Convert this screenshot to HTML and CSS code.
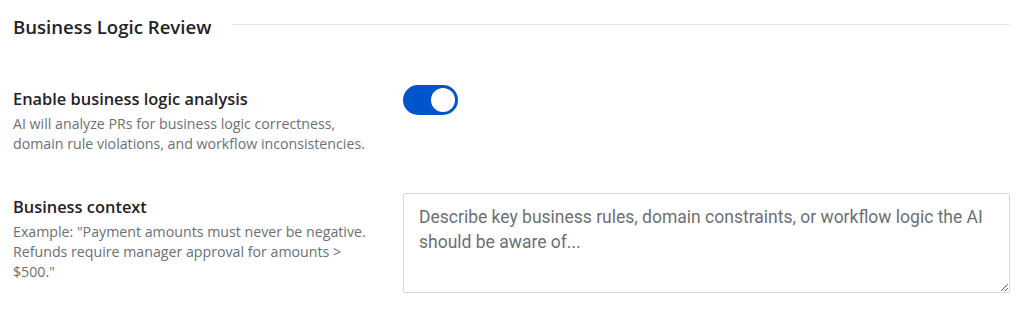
FILE: index.html
```html
<!DOCTYPE html>
<html lang="en">
<head>
    <meta charset="UTF-8">
    <meta name="viewport" content="width=device-width, initial-scale=1.0">
    <title>Business Logic Review</title>
    <link rel="stylesheet" href="styles.css">
</head>
<body>
    <section class="settings-section">
        <div class="section-header">
            <h2>Business Logic Review</h2>
            <span class="section-line"></span>
        </div>

        <div class="setting-row">
            <div class="setting-info">
                <h3>Enable business logic analysis</h3>
                <p>AI will analyze PRs for business logic correctness, domain rule violations, and workflow inconsistencies.</p>
            </div>
            <div class="setting-control">
                <label class="toggle">
                    <input type="checkbox" checked>
                    <span class="slider"></span>
                </label>
            </div>
        </div>

        <div class="setting-row">
            <div class="setting-info">
                <h3>Business context</h3>
                <p>Example: "Payment amounts must never be negative. Refunds require manager approval for amounts &gt; $500."</p>
            </div>
            <div class="setting-control">
                <textarea class="context-input" placeholder="Describe key business rules, domain constraints, or workflow logic the AI should be aware of..."></textarea>
            </div>
        </div>
    </section>
</body>
</html>
```

FILE: styles.css
```css
* {
    margin: 0;
    padding: 0;
    box-sizing: border-box;
    font-family: "Open Sans", "Noto Sans", Arial, sans-serif;
}

body {
    background: #fff;
    color: #1f2328;
}

.settings-section {
    padding: 14px 19px 0 13px;
}

.section-header {
    display: flex;
    align-items: center;
    gap: 21px;
    margin-bottom: 46px;
}

.section-header h2 {
    font-size: 18.6px;
    font-weight: 600;
    white-space: nowrap;
}

.section-line {
    flex: 1;
    height: 1px;
    background: #e3e5e8;
    margin-top: -4px;
}

.setting-row {
    display: grid;
    grid-template-columns: 360px 1fr;
    column-gap: 30px;
    margin-bottom: 39px;
}

.setting-info {
    padding-top: 2px;
}

.setting-info h3 {
    font-size: 16.4px;
    font-weight: 600;
    line-height: 24px;
    margin-bottom: 3px;
}

.setting-info p {
    font-size: 14.2px;
    line-height: 20px;
    color: #6b7075;
}

.toggle {
    position: relative;
    display: inline-block;
    width: 55px;
    height: 30px;
    cursor: pointer;
}

.toggle input {
    opacity: 0;
    width: 0;
    height: 0;
}

.slider {
    position: absolute;
    inset: 0;
    background: #0055cc;
    border-radius: 15px;
    transition: background 0.2s;
}

.slider::before {
    content: '';
    position: absolute;
    top: 3px;
    left: 3px;
    width: 24px;
    height: 24px;
    border-radius: 50%;
    background: #fff;
    transition: transform 0.2s;
}

.toggle input:checked + .slider::before {
    transform: translateX(25px);
}

.context-input {
    display: block;
    width: 100%;
    height: 100px;
    padding: 11px 15px;
    border: 1px solid #d6d8db;
    border-radius: 2px;
    font-family: Roboto, "Open Sans", sans-serif;
    font-size: 17.5px;
    line-height: 25px;
    color: #333;
    resize: vertical;
}

.context-input::placeholder {
    color: #6b7075;
}
```
